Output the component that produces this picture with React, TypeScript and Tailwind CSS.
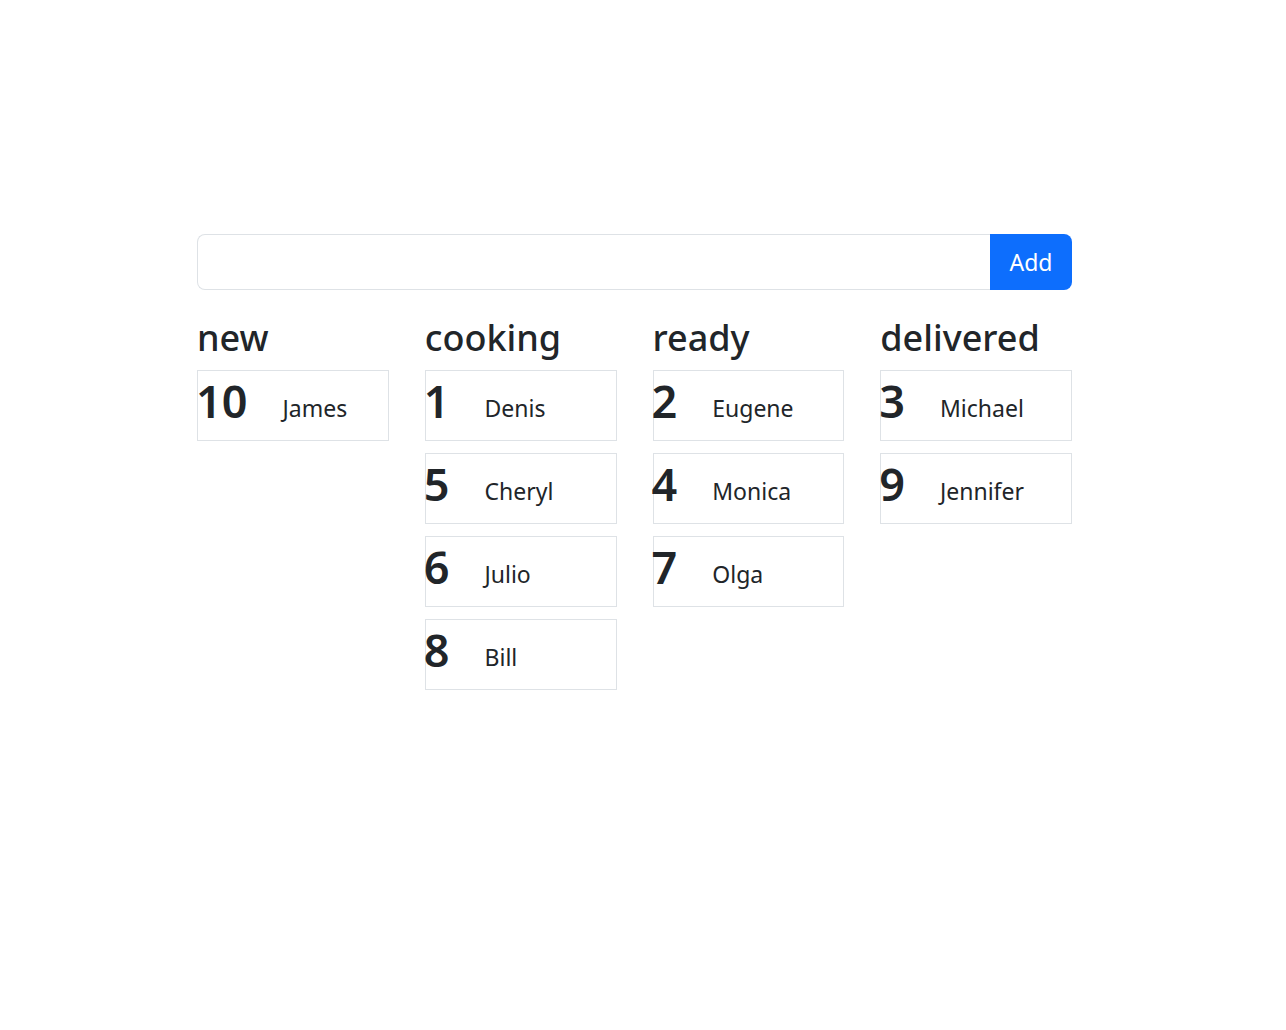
import React from "react";

const cols: { title: string; items: [number, string][] }[] = [
  { title: "new", items: [[10, "James"]] },
  { title: "cooking", items: [[1, "Denis"], [5, "Cheryl"], [6, "Julio"], [8, "Bill"]] },
  { title: "ready", items: [[2, "Eugene"], [4, "Monica"], [7, "Olga"]] },
  { title: "delivered", items: [[3, "Michael"], [9, "Jennifer"]] },
];

export default function App() {
  return (
    <div
      className="min-h-[1030px] w-full bg-white text-[#212529]"
      style={{ fontFamily: '"Noto Sans", "Open Sans", sans-serif' }}
    >
      <div className="ml-[197px] w-[875px] pt-[234px]">
        <div className="flex h-[56px]">
          <div className="flex-1 rounded-l-[8px] border border-r-0 border-[#dee2e6]" />
          <button className="w-[82px] rounded-r-[8px] bg-[#0d6efd] text-[23px] text-white">Add</button>
        </div>
        <div className="mt-[26px] grid grid-cols-4 gap-x-[36px]">
          {cols.map((c) => (
            <div key={c.title}>
              <h2 className="mb-[11px] text-[36px] font-medium leading-[1.2]">{c.title}</h2>
              <div className="flex flex-col gap-[12px]">
                {c.items.map(([n, name]) => (
                  <div key={n} className="flex h-[71px] items-start border border-[#dee2e6]">
                    <span className="-ml-[2px] text-[45px] font-semibold leading-[60px]">{n}</span>
                    <span className="ml-[35px] pt-[22px] text-[23px] leading-[30px]">{name}</span>
                  </div>
                ))}
              </div>
            </div>
          ))}
        </div>
      </div>
    </div>
  );
}
